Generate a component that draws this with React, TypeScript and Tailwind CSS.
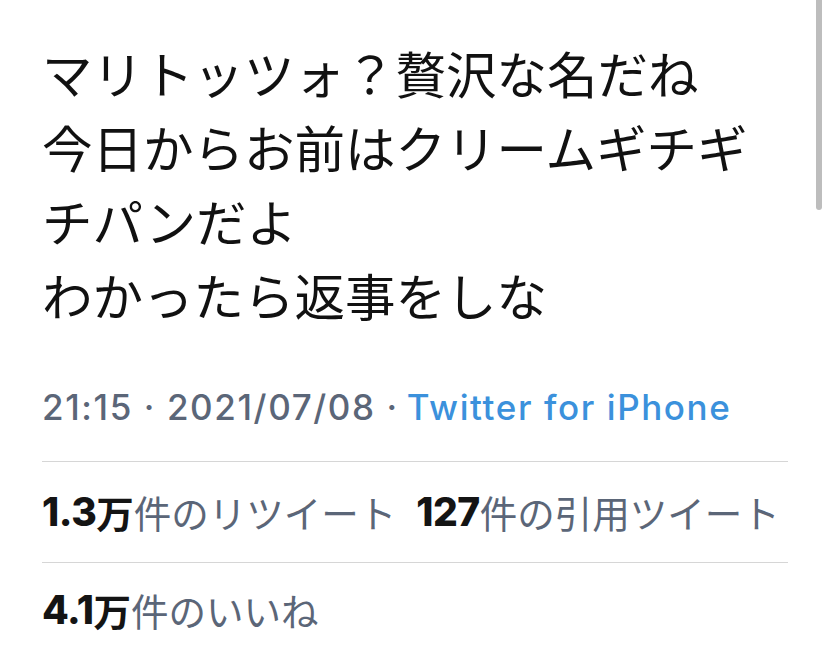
import React from "react";

const jp = '"Noto Sans CJK JP", "Noto Sans", sans-serif';
const latin = 'Inter, "Noto Sans CJK JP", sans-serif';

export default function App() {
  return (
    <div className="relative w-[828px] h-[646px] bg-white overflow-hidden">
      <div className="absolute right-[6px] top-0 w-[6px] h-[210px] rounded-b-full bg-[#bdbdbd]" />
      <div className="pl-[42px] pr-[40px]">
        <div
          className="pt-[35px] text-[50.5px] leading-[74px] text-[#111111]"
          style={{ fontFamily: jp }}
        >
          <div>マリトッツォ？贅沢な名だね</div>
          <div>今日からお前はクリームギチギ</div>
          <div>チパンだよ</div>
          <div>わかったら返事をしな</div>
        </div>
        <div
          className="mt-[51px] h-[50px] flex items-center text-[35px] font-medium tracking-[1.6px] text-[#5b6678] whitespace-nowrap"
          style={{ fontFamily: latin }}
        >
          <span>21:15 · 2021/07/08 · </span>
          <span className="ml-[8px] text-[#3b91dc]">Twitter for iPhone</span>
        </div>
        <div className="mt-[29px] border-t border-[#d6d6d6] h-[101px] flex items-center text-[37.5px] whitespace-nowrap" style={{ fontFamily: jp }}>
          <span className="font-extrabold text-[39px] tracking-[-0.5px] text-[#141414]" style={{ fontFamily: latin }}>1.3</span>
          <span className="font-bold text-[#141414]">万</span>
          <span className="text-[#5b6678]">件のリツイート</span>
          <span className="ml-[20px] font-extrabold text-[39px] tracking-[-0.5px] text-[#141414]" style={{ fontFamily: latin }}>127</span>
          <span className="text-[#5b6678]">件の引用ツイート</span>
        </div>
        <div className="border-t border-[#d6d6d6] h-[96px] flex items-center text-[37.5px] whitespace-nowrap" style={{ fontFamily: jp }}>
          <span className="font-extrabold text-[39px] tracking-[-0.5px] text-[#141414]" style={{ fontFamily: latin }}>4.1</span>
          <span className="font-bold text-[#141414]">万</span>
          <span className="text-[#5b6678]">件のいいね</span>
        </div>
      </div>
    </div>
  );
}
